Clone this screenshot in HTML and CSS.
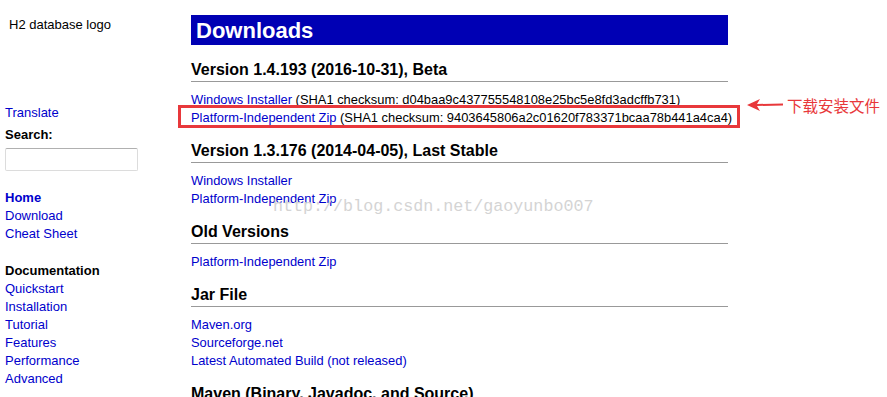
FILE: index.html
```html
<!DOCTYPE html>
<html>
<head>
	<meta charset="utf-8">
	<link rel="stylesheet" href="styles.css">
</head>
<body>
	<div id="page">
		<!-- left menu -->
		<div id="nav">
			<div class="logo">H2 database logo</div>
			<a class="item" href="#">Translate</a>
			<div class="item label">Search:</div>
			<input type="text" class="search">

			<a class="item first bold" href="#">Home</a>
			<a class="item" href="#">Download</a>
			<a class="item" href="#">Cheat Sheet</a>

			<div class="item group label">Documentation</div>
			<a class="item" href="#">Quickstart</a>
			<a class="item" href="#">Installation</a>
			<a class="item" href="#">Tutorial</a>
			<a class="item" href="#">Features</a>
			<a class="item" href="#">Performance</a>
			<a class="item" href="#">Advanced</a>
		</div>

		<!-- downloads content -->
		<div id="main">
			<h1>Downloads</h1>

			<h2>Version 1.4.193 (2016-10-31), Beta</h2>
			<p>
				<a href="#">Windows Installer</a> (SHA1 checksum: d04baa9c437755548108e25bc5e8fd3adcffb731)<br>
				<a href="#">Platform-Independent Zip</a> (SHA1 checksum: 9403645806a2c01620f783371bcaa78b441a4ca4)
			</p>

			<h2>Version 1.3.176 (2014-04-05), Last Stable</h2>
			<p>
				<a href="#">Windows Installer</a><br>
				<a href="#">Platform-Independent Zip</a>
			</p>

			<h2>Old Versions</h2>
			<p>
				<a href="#">Platform-Independent Zip</a>
			</p>

			<h2>Jar File</h2>
			<p>
				<a href="#">Maven.org</a><br>
				<a href="#">Sourceforge.net</a><br>
				<a href="#">Latest Automated Build (not released)</a>
			</p>

			<h2>Maven (Binary, Javadoc, and Source)</h2>
		</div>
	</div>

	<!-- screenshot annotations -->
	<div id="mark"></div>
	<div id="note">
		<svg width="36" height="12" viewBox="0 0 36 12">
			<path d="M0 6 L13 0 L10 5 L36 4.5 L36 6.5 L10 7 L13 12 Z" fill="#e8383b"/>
		</svg>
		<span>下载安装文件</span>
	</div>
	<div id="watermark">http://blog.csdn.net/gaoyunbo007</div>
</body>
</html>
```
FILE: styles.css
```css
body {
	margin: 0;
	font-family: "Liberation Sans", Arial, sans-serif;
	font-size: 13px;
	color: #000;
	background: #fff;
	overflow: hidden;
}

a {
	color: #0000cc;
	text-decoration: none;
}

#page {
	display: flex;
}

/* left menu */
#nav {
	width: 186px;
	padding: 16px 0 0 5px;
	display: flex;
	flex-direction: column;
	align-items: flex-start;
}

#nav .logo {
	padding-left: 4px;
	line-height: 18px;
	margin-bottom: 70px;
}

#nav .item {
	line-height: 18px;
}

#nav .label {
	font-weight: bold;
	margin-top: 4px;
}

#nav .bold {
	font-weight: bold;
}

#nav .first {
	margin-top: 18px;
}

#nav .group {
	margin-top: 19px;
}

#nav .search {
	box-sizing: border-box;
	width: 133px;
	height: 23px;
	margin: 4px 0 0 0;
	border: 1px solid #dcdcdc;
	border-top-color: #b0b0b0;
	border-radius: 2px;
}

/* main column */
#main {
	width: 537px;
	padding-top: 15px;
}

h1 {
	margin: 0;
	height: 30px;
	padding-left: 5px;
	background: #0000b4;
	color: #fff;
	font-size: 22px;
	line-height: 31px;
}

h2 {
	margin: 14px 0 0 0;
	padding-bottom: 1px;
	border-bottom: 1px solid #999;
	font-size: 16px;
	line-height: 20px;
	white-space: nowrap;
}

h1 + h2 {
	margin-top: 15px;
}

p {
	margin: 9px 0 14px 0;
	line-height: 18px;
	font-size: 12.9px;
	white-space: nowrap;
}

/* annotations over the screenshot */
#mark {
	position: absolute;
	left: 178px;
	top: 105px;
	width: 556px;
	height: 17px;
	border: 3px solid #e8383b;
}

#note {
	position: absolute;
	left: 747px;
	top: 94px;
	display: flex;
	align-items: center;
	gap: 4px;
	color: #e8383b;
	font-family: "Noto Sans CJK SC", sans-serif;
	font-size: 15.5px;
	line-height: 22px;
}

#watermark {
	position: absolute;
	left: 273px;
	top: 197px;
	font-family: "Liberation Mono", monospace;
	font-size: 16.7px;
	color: #d4d4d4;
	pointer-events: none;
}
```
